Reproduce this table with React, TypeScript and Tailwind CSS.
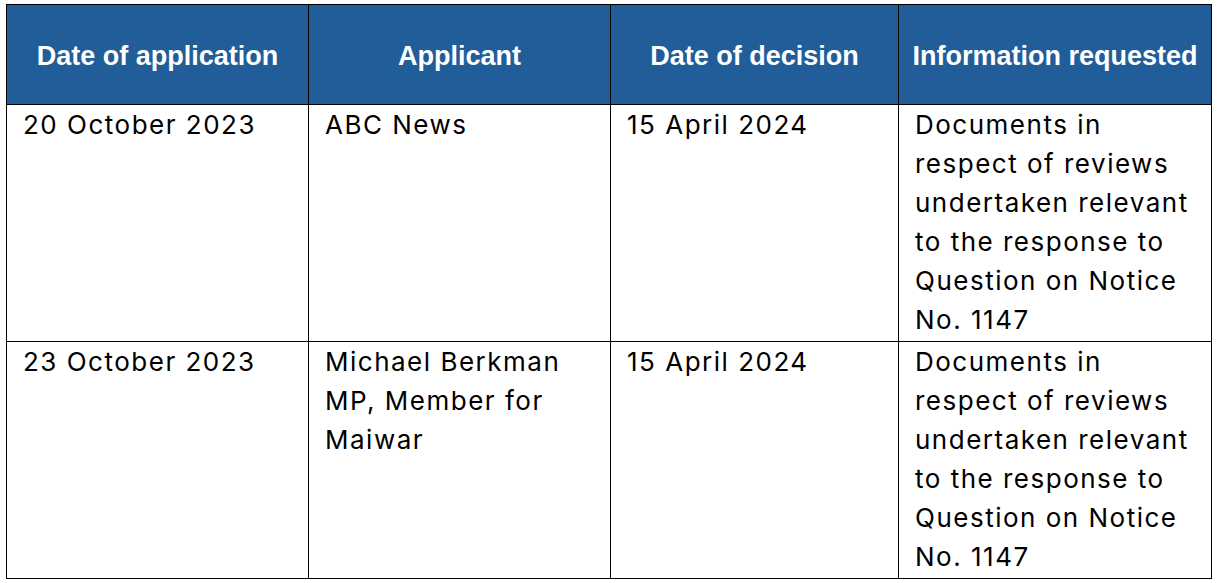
const headers = [
  "Date of application",
  "Applicant",
  "Date of decision",
  "Information requested",
];

const info = [
  "Documents in",
  "respect of reviews",
  "undertaken relevant",
  "to the response to",
  "Question on Notice",
  "No. 1147",
];

const rows = [
  {
    date: ["20 October 2023"],
    applicant: ["ABC News"],
    decision: ["15 April 2024"],
  },
  {
    date: ["23 October 2023"],
    applicant: ["Michael Berkman", "MP, Member for", "Maiwar"],
    decision: ["15 April 2024"],
  },
];

const widths = ["w-[302px]", "w-[302px]", "w-[288px]", "w-[313px]"];

const Lines = ({ lines }: { lines: string[] }) => (
  <>
    {lines.map((l, i) => (
      <span key={i} className="block whitespace-nowrap">
        {l}
      </span>
    ))}
  </>
);

export default function App() {
  return (
    <div className="min-h-[583px] w-[1219px] bg-white pl-[6px] pt-[4px]">
      <table className="table-fixed border-collapse border border-black">
        <thead>
          <tr className="h-[100px] bg-[#215e99]">
            {headers.map((h, i) => (
              <th
                key={h}
                className={`${widths[i]} border border-black px-1 pt-[3px] text-center align-middle font-['Liberation_Sans',Arial,sans-serif] text-[27px] font-bold text-white`}
              >
                {h}
              </th>
            ))}
          </tr>
        </thead>
        <tbody>
          {rows.map((r) => (
            <tr key={r.date[0]}>
              {[r.date, r.applicant, r.decision, info].map((cell, i) => (
                <td
                  key={i}
                  className={`${widths[i]} border border-black pb-[2px] pl-4 pr-1 align-top font-['Inter',sans-serif] text-[26px] leading-[39px] tracking-[1.5px] text-black`}
                >
                  <Lines lines={cell} />
                </td>
              ))}
            </tr>
          ))}
        </tbody>
      </table>
    </div>
  );
}
